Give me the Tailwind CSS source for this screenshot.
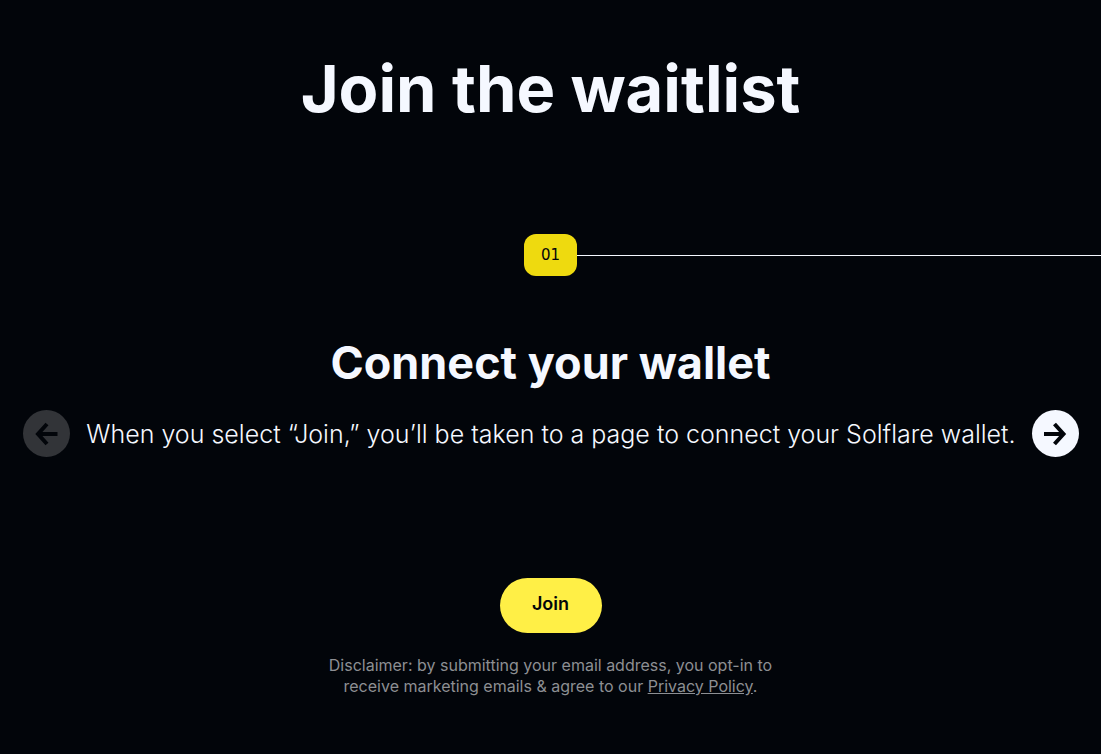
<!DOCTYPE html>
<html lang="en">
<head>
    <meta charset="UTF-8">
    <script src="https://cdn.jsdelivr.net/npm/@tailwindcss/browser@4"></script>
    <meta name="viewport" content="width=device-width, initial-scale=1.0">
    <title>Join the waitlist</title>
</head>
<body class="bg-[#02050a] text-[#f5f8ff] font-['Inter',sans-serif] min-h-screen overflow-x-hidden text-center">
    <main class="pt-[49px]">
      <h1 class="text-[65px] leading-20 font-bold">Join the waitlist</h1>

      <!-- Step marker, the line runs off to the next step -->
      <div class="mt-[105px] grid grid-cols-[1fr_auto_1fr] items-center">
        <span></span>
        <span class="w-[53px] h-[42px] rounded-xl bg-[#eeda0f] text-[#02050a] text-[15px] font-['DejaVu_Sans',sans-serif] flex items-center justify-center">01</span>
        <span class="h-px bg-[#f5f8ff]"></span>
      </div>

      <h2 class="mt-[55px] text-[45px] leading-16 font-bold">Connect your wallet</h2>
      <div class="mt-[15px] pl-[23px] pr-[22px] flex items-center justify-between">
        <button aria-label="Previous step" disabled class="size-[47px] shrink-0 rounded-full bg-[#323438] text-[#02050a] flex items-center justify-center">
          <svg class="size-6" viewBox="0 0 24 24" fill="none" stroke="currentColor" stroke-width="4"><path d="M22.5 12H3M12 2L3 12L12 22"/></svg>
        </button>
        <p class="text-[25px] leading-9 font-light">When you select “Join,” you’ll be taken to a page to connect your Solflare wallet.</p>
        <button aria-label="Next step" class="size-[47px] shrink-0 rounded-full bg-[#f5f8ff] text-[#02050a] flex items-center justify-center">
          <svg class="size-6" viewBox="0 0 24 24" fill="none" stroke="currentColor" stroke-width="4"><path d="M1 12H20.5M11.5 2L20.5 12L11.5 22"/></svg>
        </button>
      </div>

      <button class="mt-[121px] w-[102px] h-[55px] pb-1 rounded-full bg-[#ffef46] text-[#02050a] text-lg font-semibold">Join</button>
      <p class="mt-[22px] text-base leading-[21px] text-[#8d8f93]">
        Disclaimer: by submitting your email address, you opt-in to<br>
        receive marketing emails &amp; agree to our <a href="#" class="underline">Privacy Policy</a>.
      </p>
    </main>
  </body>

</html>
